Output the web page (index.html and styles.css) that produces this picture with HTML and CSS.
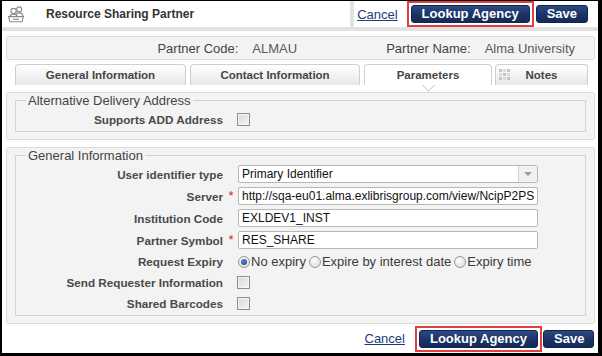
FILE: index.html
```html
<!DOCTYPE html>
<html lang="en">
<head>
<meta charset="utf-8">
<title>Resource Sharing Partner</title>
<link rel="stylesheet" href="styles.css">
</head>
<body>
<div class="frame">
  <header class="topbar">
    <svg class="hdr-icon" width="18" height="18" viewBox="0 0 18 18" aria-hidden="true">
      <g fill="#fff" stroke="#8a8a8a" stroke-width="1.1">
        <path d="M8.5 11.5 C9 8.6 10.4 7.9 12.2 7.9 C14.1 7.9 15.6 9 16.2 11.5"/>
        <circle cx="12.2" cy="4.4" r="2.5"/>
        <path d="M2.4 12.2 C3 9.9 4.6 9.1 6.6 9.1 C8.6 9.1 10.1 9.9 10.7 12.2"/>
        <circle cx="6.6" cy="6" r="2.6"/>
        <path d="M1.6 11.6 L3 16.8 H15 L16.4 11.6 Z"/>
        <path d="M6 14.2 H12" />
      </g>
    </svg>
    <span class="title">Resource Sharing Partner</span>
    <span class="sep"></span>
    <a class="cancel" href="#">Cancel</a>
    <span class="hl"><button class="btn">Lookup Agency</button></span>
    <button class="btn">Save</button>
  </header>
  <div class="band"></div>

  <main class="content">
    <div class="infobar">
      <div class="pair"><span class="k">Partner Code:</span><span class="v">ALMAU</span></div>
      <div class="pair"><span class="k">Partner Name:</span><span class="v">Alma University</span></div>
    </div>

    <nav class="tabs">
      <div class="tab w1">General Information</div>
      <div class="tab w2">Contact Information</div>
      <div class="tab w3 active">Parameters</div>
      <div class="tab w4">
        <svg class="notes-icon" width="11" height="11" viewBox="0 0 11 11" aria-hidden="true">
          <g fill="#c4c4c4">
            <rect x="0" y="0" width="3" height="3"/><rect x="4" y="0" width="3" height="3" fill="#dadada"/><rect x="8" y="0" width="3" height="3"/>
            <rect x="0" y="4" width="3" height="3" fill="#dadada"/><rect x="4" y="4" width="3" height="3"/><rect x="8" y="4" width="3" height="3" fill="#dadada"/>
            <rect x="0" y="8" width="3" height="3"/><rect x="4" y="8" width="3" height="3" fill="#dadada"/><rect x="8" y="8" width="3" height="3"/>
          </g>
        </svg>
        Notes
      </div>
    </nav>

    <section class="panel">
      <fieldset class="fs">
        <legend>Alternative Delivery Address</legend>
        <div class="form one">
          <label class="lbl">Supports ADD Address</label><span class="req"></span>
          <div class="ctl"><span class="chk"></span></div>
        </div>
      </fieldset>
    </section>

    <section class="panel">
      <fieldset class="fs">
        <legend>General Information</legend>
        <div class="form seven">
          <label class="lbl">User identifier type</label><span class="req"></span>
          <div class="ctl">
            <div class="select"><span class="sel-text">Primary Identifier</span><span class="sel-btn"><span class="caret"></span></span></div>
          </div>

          <label class="lbl">Server</label><span class="req">*</span>
          <div class="ctl"><input class="inp" value="http://sqa-eu01.alma.exlibrisgroup.com/view/NcipP2PServlet" readonly></div>

          <label class="lbl">Institution Code</label><span class="req"></span>
          <div class="ctl"><input class="inp" value="EXLDEV1_INST" readonly></div>

          <label class="lbl">Partner Symbol</label><span class="req">*</span>
          <div class="ctl"><input class="inp" value="RES_SHARE" readonly></div>

          <label class="lbl">Request Expiry</label><span class="req"></span>
          <div class="ctl radios">
            <span class="radio on"></span><span class="rtext">No expiry</span>
            <span class="radio"></span><span class="rtext">Expire by interest date</span>
            <span class="radio"></span><span class="rtext">Expiry time</span>
          </div>

          <label class="lbl">Send Requester Information</label><span class="req"></span>
          <div class="ctl"><span class="chk"></span></div>

          <label class="lbl">Shared Barcodes</label><span class="req"></span>
          <div class="ctl"><span class="chk"></span></div>
        </div>
      </fieldset>
    </section>
  </main>

  <footer class="footbar">
    <a class="cancel" href="#">Cancel</a>
    <span class="hl"><button class="btn">Lookup Agency</button></span>
    <button class="btn save-f">Save</button>
  </footer>
</div>
</body>
</html>
```

FILE: styles.css
```css
* { box-sizing: border-box; }

html, body {
  margin: 0;
  padding: 0;
  background: #000;
}

body {
  font-family: "Liberation Sans", Arial, sans-serif;
  color: #333;
}

.frame {
  width: 602px;
  height: 356px;
  border-style: solid;
  border-color: #000;
  border-width: 1px 4px 3px 2px;
  background: #fff;
  display: flex;
  flex-direction: column;
  overflow: hidden;
}

/* ---------- header ---------- */
.topbar {
  height: 26px;
  display: flex;
  align-items: center;
  padding: 0 10px 0 5px;
  flex: none;
}

.hdr-icon { flex: none; }

.title {
  margin-left: 21px;
  font-size: 12px;
  font-weight: bold;
  color: #333;
}

.sep {
  align-self: stretch;
  width: 4px;
  margin-left: auto;
  margin-right: 3px;
  background: #e3e3e3;
  margin-top: -1px;
}

.cancel {
  font-size: 13px;
  color: #1e3b78;
  text-decoration: underline;
}

.topbar .cancel { margin-right: 9px; }

.hl {
  display: inline-flex;
  border: 2px solid #e2403f;
  padding: 2px;
  background: #fff;
}

.btn {
  height: 18px;
  padding: 0 10px;
  border: 1px solid #102650;
  border-radius: 3px;
  background: linear-gradient(#2c4a82, #1a3365 55%, #142b58);
  color: #fff;
  font-family: "Liberation Sans", Arial, sans-serif;
  font-size: 13px;
  font-weight: bold;
  line-height: 16px;
  margin: 0;
}

.hl + .btn { margin-left: 2px; }

.band {
  height: 4px;
  background: #e2e2e2;
  flex: none;
}

/* ---------- content ---------- */
.content {
  padding: 0 3px 0 4px;
  flex: none;
}

.infobar {
  margin-top: 5px;
  height: 24px;
  border: 1px solid #dcdcdc;
  border-radius: 3px;
  background: #f3f3f3;
  display: flex;
  align-items: center;
  justify-content: flex-end;
  gap: 89px;
  padding-right: 19px;
  font-size: 13px;
}

.pair { display: flex; gap: 14px; }
.pair .k { color: #444; }
.pair .v { color: #5a5a5a; }

/* ---------- tabs ---------- */
.tabs {
  margin-top: 4px;
  height: 21px;
  display: flex;
  gap: 4px;
  padding-left: 9px;
}

.tab {
  position: relative;
  height: 21px;
  border: 1px solid #cfcfcf;
  border-bottom: none;
  border-radius: 4px 4px 0 0;
  background: linear-gradient(#ffffff, #e8e8e8);
  display: flex;
  align-items: center;
  justify-content: center;
  font-size: 11.5px;
  font-weight: bold;
  color: #454545;
}

.w1 { width: 171px; }
.w2 { width: 170px; }
.w3 { width: 128px; }
.w4 { width: 93px; margin-left: -1px; }

.tab.active { background: #fff; }

.tab.active::after {
  content: "";
  position: absolute;
  left: 50%;
  top: 100%;
  width: 8px;
  height: 8px;
  margin-left: -4px;
  margin-top: -4px;
  background: #fff;
  border-right: 1px solid #cccccc;
  border-bottom: 1px solid #cccccc;
  transform: rotate(45deg);
}

.notes-icon {
  position: absolute;
  left: 3px;
  top: 4px;
}

/* ---------- panels ---------- */
.panel {
  margin-top: 7px;
  border: 1px solid #dcdcdc;
  border-radius: 3px;
  background: #f3f3f3;
  padding: 0 8px 7px 8px;
}

.fs {
  margin: 0;
  padding: 0 0 1px 0;
  border: 1px solid #d3d3d3;
  min-width: 0;
}

.fs legend {
  font-size: 13px;
  line-height: 15px;
  color: #444;
  padding: 0 2px;
  margin-left: 10px;
}

.form {
  display: grid;
  grid-template-columns: 208px 14px 300px;
}

.form.one { grid-template-rows: 22px; }
.form.seven { grid-template-rows: repeat(4, 22px) repeat(3, 21px); }

.lbl {
  align-self: center;
  text-align: right;
  padding-right: 1px;
  font-size: 11.7px;
  font-weight: bold;
  color: #4a4a4a;
}

.req {
  align-self: center;
  text-align: center;
  color: #e01b1b;
  font-size: 13px;
  line-height: 13px;
  margin-top: -2px;
}

.ctl {
  display: flex;
  align-items: center;
}

/* ---------- controls ---------- */
.select {
  width: 300px;
  height: 18px;
  border: 1px solid #b7b7b7;
  border-radius: 2px;
  background: #fff;
  display: flex;
  align-items: stretch;
}

.sel-text {
  flex: 1;
  padding-left: 3px;
  font-size: 12px;
  line-height: 16px;
  color: #111;
}

.sel-btn {
  width: 19px;
  border-left: 1px solid #d0d0d0;
  background: #f1f1f1;
  display: flex;
  align-items: center;
  justify-content: center;
}

.caret {
  width: 0;
  height: 0;
  border-left: 4px solid transparent;
  border-right: 4px solid transparent;
  border-top: 4px solid #9a9a9a;
}

.inp {
  width: 300px;
  height: 18px;
  margin: 0;
  border: 1px solid #b7b7b7;
  border-radius: 2px;
  background: #fff;
  padding: 0 3px;
  font-family: "Liberation Sans", Arial, sans-serif;
  font-size: 12px;
  color: #111;
  outline: none;
}

.chk {
  width: 13px;
  height: 13px;
  border: 1px solid #8e8e8e;
  background: linear-gradient(135deg, #d8d8d8, #f6f6f6);
  box-shadow: inset 0 0 0 1px #f4f4f4;
  margin-left: -1px;
}

.radios {
  font-size: 13px;
  color: #3a3a3a;
}

.radio {
  flex: none;
  width: 12px;
  height: 12px;
  border-radius: 50%;
  border: 1px solid #9a9a9a;
  background: radial-gradient(circle at 40% 35%, #ffffff, #d4d4d4);
  margin-left: 3px;
  display: flex;
  align-items: center;
  justify-content: center;
}

.radio:first-child { margin-left: 0; }

.radio.on::after {
  content: "";
  width: 6px;
  height: 6px;
  border-radius: 50%;
  background: radial-gradient(circle at 40% 35%, #5a8ad8, #143d8a);
}

.rtext { margin-left: 1px; }

/* ---------- footer ---------- */
.footbar {
  flex: 1;
  display: flex;
  align-items: center;
  justify-content: flex-end;
  padding-right: 4px;
}

.footbar .cancel { margin-right: 10px; }
.footbar .hl + .btn { margin-left: 1px; }
.save-f { padding: 0 10px; width: 51px; }
```
